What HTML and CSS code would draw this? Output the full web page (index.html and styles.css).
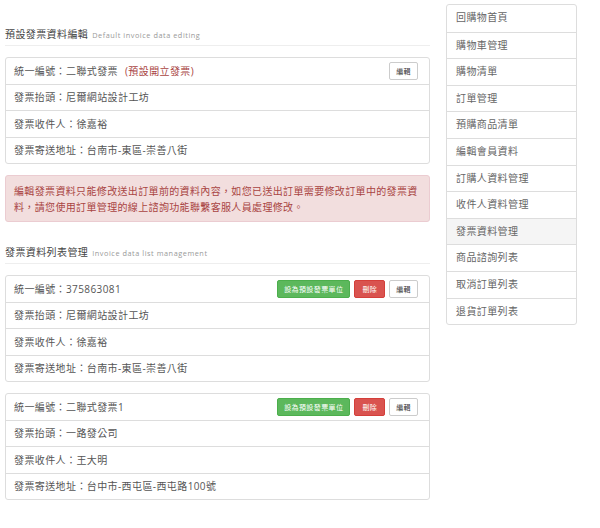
FILE: index.html
```html
<!DOCTYPE html>
<html lang="zh-Hant">
<head>
<meta charset="utf-8">
<title>發票資料管理</title>
<link rel="stylesheet" href="styles.css">
</head>
<body>
<div class="page">
  <div class="main">
    <h2 class="heading heading-first">預設發票資料編輯<small>Default invoice data editing</small></h2>
    <div class="panel">
      <div class="row row-head">
        <span>統一編號：二聯式發票<em class="tag">(預設開立發票)</em></span>
        <div class="btns"><button class="btn btn-default">編輯</button></div>
      </div>
      <div class="row">發票抬頭：尼爾網站設計工坊</div>
      <div class="row">發票收件人：徐嘉裕</div>
      <div class="row">發票寄送地址：台南市-東區-崇善八街</div>
    </div>
    <div class="alert">編輯發票資料只能修改送出訂單前的資料內容，如您已送出訂單需要修改訂單中的發票資料，請您使用訂單管理的線上諮詢功能聯繫客服人員處理修改。</div>
    <h2 class="heading">發票資料列表管理<small>Invoice data list management</small></h2>
    <div class="panel">
      <div class="row row-head">
        <span>統一編號：375863081</span>
        <div class="btns"><button class="btn btn-success">設為預設發票單位</button><button class="btn btn-danger">刪除</button><button class="btn btn-default">編輯</button></div>
      </div>
      <div class="row">發票抬頭：尼爾網站設計工坊</div>
      <div class="row">發票收件人：徐嘉裕</div>
      <div class="row">發票寄送地址：台南市-東區-崇善八街</div>
    </div>
    <div class="panel">
      <div class="row row-head">
        <span>統一編號：二聯式發票1</span>
        <div class="btns"><button class="btn btn-success">設為預設發票單位</button><button class="btn btn-danger">刪除</button><button class="btn btn-default">編輯</button></div>
      </div>
      <div class="row">發票抬頭：一路發公司</div>
      <div class="row">發票收件人：王大明</div>
      <div class="row">發票寄送地址：台中市-西屯區-西屯路100號</div>
    </div>
  </div>
  <ul class="side">
    <li class="side-item">回購物首頁</li>
    <li class="side-item">購物車管理</li>
    <li class="side-item">購物清單</li>
    <li class="side-item">訂單管理</li>
    <li class="side-item">預購商品清單</li>
    <li class="side-item">編輯會員資料</li>
    <li class="side-item">訂購人資料管理</li>
    <li class="side-item">收件人資料管理</li>
    <li class="side-item active">發票資料管理</li>
    <li class="side-item">商品諮詢列表</li>
    <li class="side-item">取消訂單列表</li>
    <li class="side-item">退貨訂單列表</li>
  </ul>
</div>
</body>
</html>
```
FILE: styles.css
```css
* { box-sizing: border-box; }
html, body { margin: 0; padding: 0; background: #fff; }
body {
  font-family: "Open Sans", "Noto Sans CJK TC", sans-serif;
  font-size: 10px;
  color: #555;
  letter-spacing: 0.4px;
}
.page {
  display: flex;
  align-items: flex-start;
  padding-left: 5px;
}
.main { width: 425px; }
.heading {
  display: flex;
  align-items: baseline;
  height: 19px;
  margin: 23px 0 0;
  font-size: 10px;
  font-weight: normal;
  line-height: 14px;
  color: #444;
  padding-bottom: 4px;
  border-bottom: 1px solid #eee;
  overflow: hidden;
}
.heading-first { margin-top: 27px; }
.heading small {
  font-size: 7.3px;
  line-height: 14px;
  color: #999;
  margin-left: 4px;
  letter-spacing: 0.55px;
}
.panel {
  margin-top: 11px;
  border: 1px solid #ddd;
  border-radius: 3px;
}
.row {
  display: flex;
  align-items: center;
  justify-content: space-between;
  height: 26.5px;
  padding: 0 11px 0 8px;
  border-top: 1px solid #ddd;
  line-height: 14px;
}
.row:first-child { border-top: none; height: 25.5px; }
.tag { font-style: normal; color: #a94442; margin-left: 7px; }
.btns { display: flex; gap: 4px; }
.btn {
  height: 18px;
  padding: 0 6px;
  font-family: "Noto Sans CJK TC", sans-serif;
  font-size: 7px;
  letter-spacing: 0.4px;
  line-height: 16px;
  border: 1px solid transparent;
  border-radius: 2px;
  cursor: pointer;
}
.btn-default { background: #fff; border-color: #ccc; color: #333; padding: 0 6px; }
.btn-success { background: #5cb85c; border-color: #4cae4c; color: #fff; padding: 0 6px; }
.btn-danger { background: #d9534f; border-color: #d43f3a; color: #fff; padding: 0 7px; }
.alert {
  margin-top: 11px;
  background: #f2dede;
  border: 1px solid #ebccd1;
  border-radius: 3px;
  color: #a94442;
  padding: 7px 8px 6px 8px;
  line-height: 16px;
  letter-spacing: 0.35px;
}
.side {
  list-style: none;
  margin: 4px 0 0 16px;
  padding: 0;
  width: 131px;
  border: 1px solid #ddd;
  border-radius: 3px;
}
.side-item {
  height: 26.6px;
  line-height: 25.6px;
  padding-left: 9px;
  color: #666;
  border-top: 1px solid #ddd;
}
.side-item:first-child { border-top: none; }
.side-item.active { background: #f5f5f5; }
```
